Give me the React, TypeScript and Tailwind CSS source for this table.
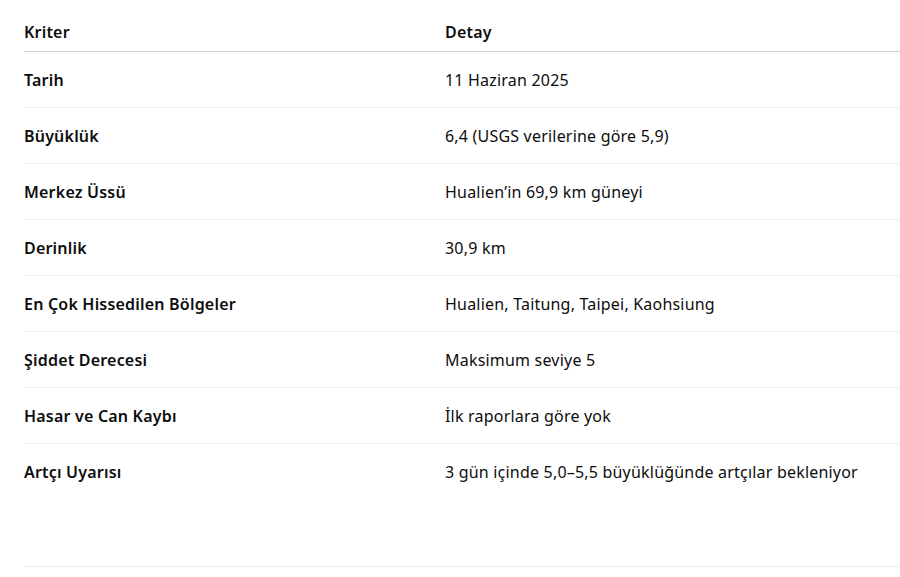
import React from "react";

const rows: [string, string][] = [
  ["Tarih", "11 Haziran 2025"],
  ["Büyüklük", "6,4 (USGS verilerine göre 5,9)"],
  ["Merkez Üssü", "Hualien’in 69,9 km güneyi"],
  ["Derinlik", "30,9 km"],
  ["En Çok Hissedilen Bölgeler", "Hualien, Taitung, Taipei, Kaohsiung"],
  ["Şiddet Derecesi", "Maksimum seviye 5"],
  ["Hasar ve Can Kaybı", "İlk raporlara göre yok"],
  ["Artçı Uyarısı", "3 gün içinde 5,0–5,5 büyüklüğünde artçılar bekleniyor"],
];

export default function App() {
  return (
    <div
      className="w-[900px] h-[577px] bg-white overflow-hidden pl-6 pt-3 text-[#0d0d0d] text-[16px] leading-6 tracking-[0.2px]"
      style={{ fontFamily: '"Noto Sans", "Open Sans", sans-serif' }}
    >
      <div className="w-[900px]">
        <div className="flex h-10 items-center border-b border-[#d4d4d4] font-semibold">
          <div className="w-[421px]">Kriter</div>
          <div>Detay</div>
        </div>
        {rows.map(([k, v], i) => (
          <div
            key={k}
            className={
              "flex h-14 items-center " +
              (i < rows.length - 1 ? "border-b border-[#efefef]" : "")
            }
          >
            <div className="w-[421px] font-semibold">{k}</div>
            <div>{v}</div>
          </div>
        ))}
      </div>
      <div className="mt-[66px] h-px bg-[#ececec] w-[900px]" />
    </div>
  );
}
